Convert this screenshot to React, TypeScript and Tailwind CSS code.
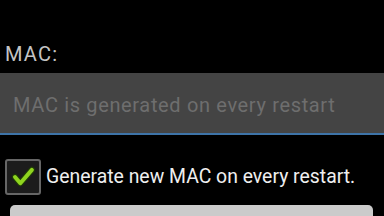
import React from 'react';

const CheckMark = () => (
  <svg width="36" height="36" viewBox="0 0 36 36" className="block">
    <polyline
      points="9,18 15,25 28,10"
      fill="none"
      stroke="#1f3a08"
      strokeWidth="7"
      strokeLinecap="round"
      strokeLinejoin="round"
    />
    <polyline
      points="9,18 15,25 28,10"
      fill="none"
      stroke="#8fd41f"
      strokeWidth="4.5"
      strokeLinecap="round"
      strokeLinejoin="round"
    />
  </svg>
);

export default function App() {
  return (
    <div className="w-[384px] h-[216px] overflow-hidden bg-black font-['Roboto','Liberation_Sans',sans-serif]">
      {/* Label */}
      <div className="pt-[42px] pl-[5px] text-[20px] leading-[24px] tracking-[1.2px] text-[#c4c4c4]">MAC:</div>

      {/* Text field */}
      <div className="mt-[7px] h-[62px] bg-[#444444] border-b-2 border-[#3e74a8] pt-[20px] pl-[13px]">
        <span className="text-[20px] leading-[24px] tracking-[0.65px] text-[#6e6e6e]">MAC is generated on every restart</span>
      </div>

      {/* Checkbox row */}
      <div className="mt-[24px] pl-[5px] flex items-center gap-[5px]">
        <div className="w-[36px] h-[36px] rounded-[3px] border-2 border-[#666666] bg-[#1c1c1c] flex items-center justify-center">
          <CheckMark />
        </div>
        <span className="text-[19.4px] leading-[24px] text-[#efefef]">Generate new MAC on every restart.</span>
      </div>

      {/* Button */}
      <div className="mt-[10px] mx-[10px] w-[363px] h-[44px] rounded-[5px] bg-[#cbcbcb]" />
    </div>
  );
}
